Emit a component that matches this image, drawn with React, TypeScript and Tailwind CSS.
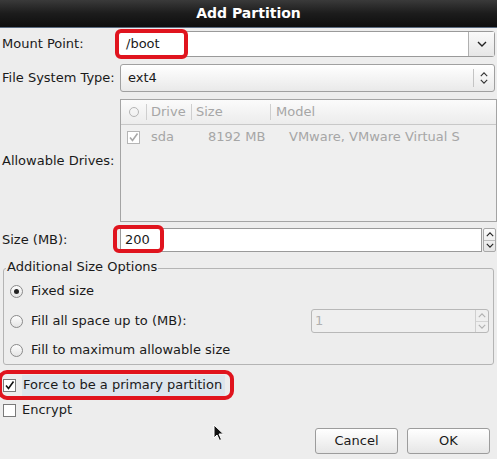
import React from "react";

const font = { fontFamily: '"DejaVu Sans", "Liberation Sans", sans-serif' };

function Chevron({ dir = "down", className = "" }: { dir?: "up" | "down"; className?: string }) {
  return (
    <svg width="10" height="6" viewBox="0 0 10 6" className={className}>
      <path
        d={dir === "down" ? "M1 1 L5 5 L9 1" : "M1 5 L5 1 L9 5"}
        fill="none"
        stroke="currentColor"
        strokeWidth="1.4"
      />
    </svg>
  );
}

function Radio({ checked }: { checked?: boolean }) {
  return (
    <span className="flex h-[13px] w-[13px] items-center justify-center rounded-full border border-[#8a8a8a] bg-gradient-to-b from-[#fdfdfd] to-[#e4e4e4]">
      {checked && <span className="h-[5px] w-[5px] rounded-full bg-[#222]" />}
    </span>
  );
}

function Check({ checked, dim }: { checked?: boolean; dim?: boolean }) {
  return (
    <span
      className={`flex h-[13px] w-[13px] items-center justify-center border ${
        dim ? "border-[#b5b5b5] text-[#a8a8a8]" : "border-[#7a7a7a] text-[#111]"
      } bg-white`}
    >
      {checked && (
        <svg width="11" height="11" viewBox="0 0 11 11">
          <path d="M2 5.5 L4.5 8.5 L9.5 1.5" fill="none" stroke="currentColor" strokeWidth="1.6" />
        </svg>
      )}
    </span>
  );
}

export default function App() {
  return (
    <div className="relative h-[459px] w-[497px] overflow-hidden bg-[#ededed] text-[13px] text-[#1a1a1a]" style={font}>
      {/* Title bar */}
      <div className="flex h-[28px] items-center justify-center border-b border-[#5a6b80] bg-gradient-to-b from-[#3a3a3a] via-[#1c1c1c] to-[#0e0e0e] text-[14px] font-bold text-white">
        Add Partition
      </div>

      {/* Mount point */}
      <div className="mt-[3px] flex h-[26px] items-center">
        <span className="w-[118px] pl-[2px]">Mount Point:</span>
        <div className="relative flex h-[26px] flex-1 mr-[2px] rounded-[3px] border border-[#9a9a9a] bg-white">
          <span className="flex flex-1 items-center pl-[7px]">/boot</span>
          <span className="flex w-[26px] items-center justify-center border-l border-[#b0b0b0] bg-gradient-to-b from-[#fafafa] to-[#e6e6e6] text-[#222]">
            <Chevron />
          </span>
          <span className="pointer-events-none absolute left-[-4px] top-[-3px] h-[30px] w-[73px] rounded-[6px] border-[4px] border-[#e0141e]" />
        </div>
      </div>

      {/* File system type */}
      <div className="mt-[7px] flex h-[28px] items-center">
        <span className="w-[120px] pl-[2px]">File System Type:</span>
        <div className="flex h-[28px] flex-1 mr-[2px] rounded-[3px] border border-[#a0a0a0] bg-gradient-to-b from-[#ffffff] to-[#e9e9e9]">
          <span className="flex flex-1 items-center pl-[7px]">ext4</span>
          <span className="my-[4px] flex w-[21px] flex-col items-center justify-center gap-[2px] border-l border-[#c4c4c4] text-[#333]">
            <Chevron dir="up" className="h-[5px] w-[8px]" />
            <Chevron className="h-[5px] w-[8px]" />
          </span>
        </div>
      </div>

      {/* Allowable drives */}
      <div className="mt-[7px] flex h-[123px] items-center">
        <span className="w-[120px] pl-[2px]">Allowable Drives:</span>
        <div className="h-full flex-1 border border-[#a4a4a4] bg-[#efefef] text-[#a6a6a6]">
          <div className="flex h-[25px] items-center border-b border-[#c8c8c8] bg-gradient-to-b from-[#fbfbfb] to-[#ececec]">
            <span className="flex w-[25px] justify-center">
              <span className="h-[10px] w-[10px] rounded-full border border-[#b4b4b4]" />
            </span>
            <span className="h-[16px] border-l border-[#cfcfcf]" />
            <span className="w-[44px] pl-[4px]">Drive</span>
            <span className="h-[16px] border-l border-[#cfcfcf]" />
            <span className="w-[78px] pl-[4px]">Size</span>
            <span className="h-[16px] border-l border-[#cfcfcf]" />
            <span className="pl-[5px]">Model</span>
          </div>
          <div className="flex h-[24px] items-center">
            <span className="flex w-[25px] justify-center">
              <Check checked dim />
            </span>
            <span className="w-[60px] pl-[5px]">sda</span>
            <span className="w-[83px] pl-[2px]">8192 MB</span>
            <span className="whitespace-nowrap">VMware, VMware Virtual S</span>
          </div>
        </div>
      </div>

      {/* Size */}
      <div className="mt-[6px] flex h-[24px] items-center">
        <span className="w-[120px] pl-[2px]">Size (MB):</span>
        <div className="relative flex h-[24px] flex-1 mr-[1px]">
          <span className="flex flex-1 items-center border border-[#9a9a9a] bg-white pl-[4px]">200</span>
          <span className="ml-[1px] flex w-[13px] flex-col rounded-[2px] border border-[#a8a8a8] bg-gradient-to-b from-[#fbfbfb] to-[#e4e4e4] text-[#222]">
            <span className="flex flex-1 items-center justify-center border-b border-[#bdbdbd]">
              <Chevron dir="up" className="h-[5px] w-[8px]" />
            </span>
            <span className="flex flex-1 items-center justify-center">
              <Chevron className="h-[5px] w-[8px]" />
            </span>
          </span>
          <span className="pointer-events-none absolute left-[-7px] top-[-3px] h-[28px] w-[51px] rounded-[6px] border-[4px] border-[#e0141e]" />
        </div>
      </div>

      {/* Additional size options */}
      <div className="relative mx-[3px] mt-[16px] h-[97px] rounded-[3px] border border-[#b4b4b4]">
        <span className="absolute left-[2px] top-[-10px] bg-[#ededed] px-[1px] leading-[16px]">
          Additional Size Options
        </span>
        <div className="flex flex-col pl-[6px] pt-[14px]">
          <div className="flex h-[16px] items-center gap-[8px]">
            <Radio checked />
            <span>Fixed size</span>
          </div>
          <div className="mt-[10px] flex h-[24px] items-center">
            <Radio />
            <span className="ml-[8px] flex-1">Fill all space up to (MB):</span>
            <div className="mr-[4px] flex h-[24px] w-[178px] rounded-[3px] border border-[#b8b8b8] bg-[#efefef] text-[#b0b0b0]">
              <span className="flex flex-1 items-center pl-[3px]">1</span>
              <span className="flex w-[13px] flex-col border-l border-[#cfcfcf]">
                <span className="flex flex-1 items-center justify-center border-b border-[#d4d4d4]">
                  <Chevron dir="up" className="h-[5px] w-[8px]" />
                </span>
                <span className="flex flex-1 items-center justify-center">
                  <Chevron className="h-[5px] w-[8px]" />
                </span>
              </span>
            </div>
          </div>
          <div className="mt-[9px] flex h-[16px] items-center gap-[8px]">
            <Radio />
            <span>Fill to maximum allowable size</span>
          </div>
        </div>
      </div>

      {/* Checkboxes */}
      <div className="relative mt-[9px] flex h-[22px] items-center pl-[3px]">
        <Check checked />
        <span className="ml-[6px] flex h-[21px] items-center bg-[#dde5ec] pl-[1px] pr-[3px]">
          Force to be a primary partition
        </span>
        <span className="pointer-events-none absolute left-[-2px] top-[-4px] h-[30px] w-[236px] rounded-[9px] border-[4px] border-[#e0141e]" />
      </div>
      <div className="mt-[6px] flex h-[16px] items-center gap-[6px] pl-[3px]">
        <Check />
        <span>Encrypt</span>
      </div>

      {/* Buttons */}
      <div className="mt-[10px] flex justify-end gap-[9px] pr-[7px]">
        <button className="h-[26px] w-[83px] rounded-[3px] border border-[#9c9c9c] bg-gradient-to-b from-[#ffffff] to-[#e6e6e6] text-[13px]">
          Cancel
        </button>
        <button className="h-[26px] w-[83px] rounded-[3px] border border-[#9c9c9c] bg-gradient-to-b from-[#ffffff] to-[#e6e6e6] text-[13px]">
          OK
        </button>
      </div>

      {/* Mouse pointer */}
      <svg className="absolute left-[213px] top-[424px]" width="12" height="18" viewBox="0 0 12 18">
        <path d="M1 1 L1 14 L4 11 L6.5 16.5 L8.5 15.5 L6 10 L10.5 10 Z" fill="#111" stroke="#fff" strokeWidth="1" />
      </svg>
    </div>
  );
}
